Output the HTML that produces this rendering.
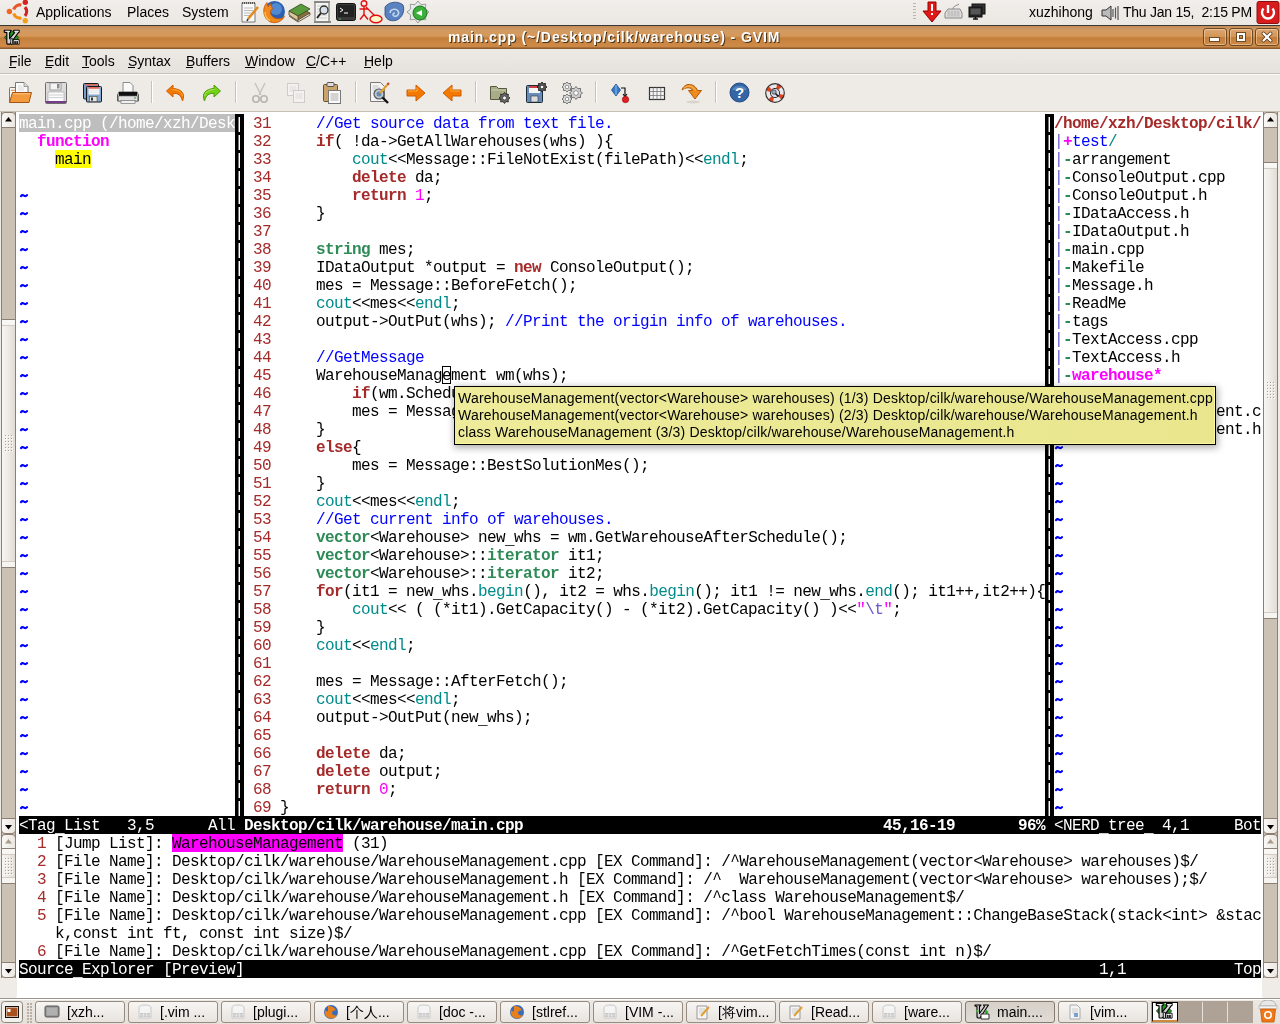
<!DOCTYPE html>
<html><head><meta charset="utf-8">
<style>
*{margin:0;padding:0;box-sizing:border-box}
html,body{width:1280px;height:1024px;overflow:hidden;-webkit-font-smoothing:antialiased;background:#efebe7;font-family:"Liberation Sans",sans-serif;position:relative}
.abs{position:absolute}
#panel{position:absolute;will-change:transform;left:0;top:0;width:1280px;height:26px;background:linear-gradient(#f1eeeb,#ebe7e2);border-bottom:1px solid #3c3833}
.pt{position:absolute;top:4px;font-size:14px;color:#000;white-space:pre;line-height:16px}
#title{position:absolute;left:0;top:26px;width:1280px;height:23px;background:linear-gradient(#c48c58 0px,#d29a62 4px,#d6985a 10px,#cf8c4a 11px,#c37e3a 12px,#c7823f 14px,#cf8a48 20px,#c88444 21px,#8e5c2a 22px,#8e5c2a 23px)}
#ttext{position:absolute;will-change:transform;left:448px;top:3px;width:332px;color:#fff;font-weight:bold;font-size:14px;letter-spacing:0.9px;white-space:pre;text-shadow:1px 1px 0 #4a3418}
.wb{position:absolute;top:2px;width:24px;height:18px;border:1px solid #6e4a22;border-radius:3px;background:linear-gradient(#dea674,#d29555 48%,#c47e3c 52%,#cd8a48);box-shadow:inset 0 0 0 1px rgba(255,230,200,0.45)}
.wb i{position:absolute;background:#fff;box-shadow:0 0 0 1px #6e4a22}
#menubar{position:absolute;will-change:transform;left:0;top:49px;width:1280px;height:25px;background:linear-gradient(#edeae6,#e5e1dc);border-bottom:1px solid #c9c1b8}
.mi{position:absolute;top:4px;font-size:14px;color:#000;white-space:pre;line-height:16px}
.ul{position:absolute;height:1px;background:#000}
#toolbar{position:absolute;left:0;top:74px;width:1280px;height:38px;background:#eeebe7;border-bottom:1px solid #c8bfb4;box-shadow:inset 0 1px 0 #fbfaf8}
.tsep{position:absolute;top:7px;width:2px;height:22px;border-left:1px solid #c9c1b8;border-right:1px solid #fff}
#text{position:absolute;left:16px;top:112px;width:1247px;height:886px;background:#fff}
.r{position:absolute;will-change:transform;font-family:"Liberation Mono",monospace;font-size:16px;letter-spacing:-0.6px;line-height:20px;height:18px;white-space:pre;color:#000}
.r span{display:inline-block;height:18px;vertical-align:top}
.r span.us{display:inline;height:auto;position:relative;top:2px;vertical-align:baseline}
.vs{position:absolute;width:9px;background:#000}
.vs::after{content:"";position:absolute;left:4px;top:0;width:1px;height:100%;background:repeating-linear-gradient(to bottom,#000 0,#000 3px,#fff 3px,#fff 18px)}
.vs::before{content:"";position:absolute;left:3px;top:0;width:1px;height:100%;background:repeating-linear-gradient(to bottom,#000 0,#000 3px,#777 3px,#777 18px)}
.sl{position:absolute;height:18px;background:#000}
.st{color:#fff}
.b{font-weight:bold}
.sb{position:absolute;width:15px;background:#cbc1b5;border-left:1px solid #8a7f72;border-right:1px solid #8a7f72}
.sbtn{position:absolute;width:15px;height:16px;background:linear-gradient(90deg,#faf8f6,#ebe6e0);border:1px solid #8a7f72}
.thumb{position:absolute;width:15px;border:1px solid #8a7f72;background:linear-gradient(to bottom,#faf9f7 0,#f7f5f2 5px,#d3ccc4 5px,#d3ccc4 6px,transparent 6px,transparent calc(100% - 6px),#d3ccc4 calc(100% - 6px),#d3ccc4 calc(100% - 5px),#f7f5f2 calc(100% - 5px)),linear-gradient(90deg,#f8f6f3,#e2dcd5)}
#tip{position:absolute;will-change:transform;left:454px;top:386px;width:762px;height:59px;background:linear-gradient(90deg,#eeeb9a,#e9e68e);border:1px solid #000;font-size:14px;line-height:17px;padding:3px 0 0 3px;white-space:pre;color:#000;letter-spacing:0.2px;box-shadow:inset -1px -1px 0 #fbf99c,1px 2px 7px 1px rgba(0,0,0,0.32)}
#taskbar{position:absolute;will-change:transform;left:0;top:998px;width:1280px;height:26px;background:linear-gradient(#ebe7e2,#e6e1db);border-top:1px solid #9c948a;box-shadow:inset 0 1px 0 #fff}
.tb{position:absolute;top:2px;width:90px;height:22px;border:1px solid #958b80;border-radius:3px;background:linear-gradient(#f7f5f3,#e8e3de);font-size:14px;line-height:19px;white-space:pre;color:#000}
.tb span{position:absolute;left:31px;top:1px}
.tb.act{background:linear-gradient(#d6d0c9,#e0dbd5);border-color:#857b70}
</style></head><body>
<div id="panel"><svg class="abs" style="left:0px;top:0px" width="32" height="25" viewBox="0 0 32 25"><path d="M13.72 9.46A6.6 6.6 0 0 1 21.37 5.04" fill="none" stroke="#e8562a" stroke-width="3.2"/><path d="M24.90 7.08A6.6 6.6 0 0 1 24.90 15.92" fill="none" stroke="#d42020" stroke-width="3.2"/><path d="M21.37 17.96A6.6 6.6 0 0 1 13.72 13.54" fill="none" stroke="#f39010" stroke-width="3.2"/><circle cx="9.40" cy="11.50" r="2.7" fill="#f26522"/><circle cx="25.30" cy="2.32" r="2.7" fill="#d8201c"/><circle cx="25.30" cy="20.68" r="2.7" fill="#f5a01a"/></svg><svg class="abs" style="left:239px;top:1px" width="22" height="22" viewBox="0 0 22 22"><path d="M3 2h13v19H3z" fill="#fafafa" stroke="#777"/><path d="M3 2h13" stroke="#555" stroke-dasharray="1 1" stroke-width="2"/><path d="M5 7h9M5 9.5h9M5 12h7M5 14.5h6" stroke="#aaa" stroke-width="0.8"/><path d="M9 18L19 6" stroke="#e08a20" stroke-width="2.6"/><path d="M9 18l-1 2" stroke="#333" stroke-width="1.5"/></svg><svg class="abs" style="left:262px;top:0px" width="24" height="24" viewBox="0 0 24 24"><circle cx="12.5" cy="11.5" r="10.5" fill="#2d5fae"/><circle cx="14" cy="9" r="6" fill="#5f9ae0" opacity="0.7"/><path d="M5 2.5C0.5 7 0.5 16 6 20.5 11 24.5 19 23 22.5 16.5 19.5 19.5 13.5 19.5 10.5 16.5 7.5 13.5 8 9.5 11 8.5 9.5 7.5 8.5 6 9 3.5 7.5 4.5 6.5 5.5 6.3 6.8 5.5 5.5 5.2 4 5 2.5z" fill="#f08a1c" stroke="#c0500a" stroke-width="0.8"/><path d="M3 12c0 4 2 7 5 8.5" stroke="#fbc04a" stroke-width="1.5" fill="none"/></svg><svg class="abs" style="left:287px;top:1px" width="24" height="22" viewBox="0 0 24 22"><path d="M2 13l12-6 9 5-12 7z" fill="#8a7040" stroke="#4a3a20" stroke-width="0.8"/><path d="M2 10l12-7 9 5-12 7z" fill="#5a9a3a" stroke="#2a4a1a" stroke-width="0.8"/><path d="M2 10v4l9 6v-5z" fill="#d8c8a0" stroke="#4a3a20" stroke-width="0.8"/><path d="M2 15l9 6 12-7v-2" fill="none" stroke="#4a3a20" stroke-width="0.8"/></svg><svg class="abs" style="left:312px;top:1px" width="22" height="22" viewBox="0 0 22 22"><path d="M3 1h14v20H3z" fill="#f4f4f0" stroke="#666"/><path d="M2 1h16M2 21h17" stroke="#888" stroke-width="2"/><path d="M5 5h10M5 8h10M5 11h10M5 14h10M5 17h10" stroke="#bbb" stroke-width="0.7"/><circle cx="12" cy="9" r="4" fill="#d8e0e8" stroke="#333" stroke-width="1.3"/><path d="M9 12l-4 5" stroke="#222" stroke-width="2"/></svg><svg class="abs" style="left:335px;top:2px" width="22" height="20" viewBox="0 0 22 20"><rect x="1.5" y="1.5" width="19" height="17" rx="2" fill="#3a3a3a" stroke="#111"/><rect x="3" y="3" width="16" height="12" fill="#222"/><path d="M5 6l3 2-3 2M9 11h4" stroke="#fff" stroke-width="1" fill="none"/><circle cx="5" cy="17" r="0.8" fill="#4c4"/></svg><svg class="abs" style="left:357px;top:0px" width="26" height="24" viewBox="0 0 26 24"><circle cx="7" cy="3.5" r="2.8" fill="none" stroke="#e01010" stroke-width="1.4"/><path d="M7 6.5v8M2.5 9h9M7 14.5l-4 5M7 14.5l4 5M9 7l9 9" stroke="#e01010" stroke-width="1.4" fill="none"/><ellipse cx="19" cy="19" rx="6" ry="3.8" fill="#faf8c8" stroke="#e01010" stroke-width="1.4"/></svg><svg class="abs" style="left:383px;top:1px" width="22" height="22" viewBox="0 0 22 22"><path d="M2 6c4-6 14-6 18-2 2 5 0 12-6 15-5 2-11 0-12-5z" fill="#5a82c0" stroke="#2a4a80" stroke-width="0.8"/><path d="M7 12c0-4 6-5 8-2s-1 6-4 5c-2-1-1-3 1-3" fill="none" stroke="#c0d8f0" stroke-width="1.5"/></svg><svg class="abs" style="left:405px;top:0px" width="26" height="24" viewBox="0 0 26 24"><polygon points="24.00,12.00 20.32,15.03 20.78,19.78 16.03,19.32 13.00,23.00 9.97,19.32 5.22,19.78 5.68,15.03 2.00,12.00 5.68,8.97 5.22,4.22 9.97,4.68 13.00,1.00 16.03,4.68 20.78,4.22 20.32,8.97" fill="#e8ece8" stroke="#888" stroke-width="0.8" stroke-linejoin="round"/><circle cx="13" cy="12" r="3.8" fill="#fff" stroke="#888" stroke-width="0.6"/><circle cx="15" cy="13" r="7" fill="#3ab03a" stroke="#1a701a" stroke-width="1"/><path d="M11 13l6-3v6z" fill="#fff"/></svg><div class="abs" style="left:913px;top:3px;width:3px;height:18px;background:repeating-linear-gradient(#bdb6ae 0 1px,transparent 1px 3px)"></div><svg class="abs" style="left:921px;top:1px" width="22" height="22" viewBox="0 0 22 22"><path d="M7 1h8v9h5l-9 11-9-11h5z" fill="#e01818" stroke="#900" stroke-width="1"/><path d="M10 3h2v7h-2zM10 12h2v2h-2z" fill="#fff"/></svg><svg class="abs" style="left:943px;top:3px" width="20" height="18" viewBox="0 0 20 18"><path d="M2 10l3-4h12l2 4v5H2z" fill="#e0e0e0" stroke="#888"/><path d="M4 9h13M4 11h13M4 13h13M6 7v6M9 7v6M12 7v6M15 7v6" stroke="#aaa" stroke-width="0.6"/><path d="M10 6c0-3 3-3 6-5" stroke="#888" fill="none"/></svg><svg class="abs" style="left:967px;top:3px" width="20" height="18" viewBox="0 0 20 18"><rect x="5" y="1" width="13" height="10" fill="#333" stroke="#111"/><rect x="2" y="4" width="13" height="10" fill="#222" stroke="#111"/><rect x="3.5" y="5.5" width="10" height="6" fill="#555"/><path d="M6 16h5M8.5 14v2" stroke="#111" stroke-width="1.6"/></svg><svg class="abs" style="left:1100px;top:4px" width="20" height="18" viewBox="0 0 20 18"><path d="M2 6h4l5-4v14l-5-4H2z" fill="#bbb" stroke="#333"/><path d="M13 5v8M15.5 3.5v11M18 2v14" stroke="#555" stroke-width="1.2"/></svg><svg class="abs" style="left:1256px;top:1px" width="24" height="23" viewBox="0 0 24 23"><rect x="1" y="0.5" width="22" height="22" rx="2" fill="#d81c1c" stroke="#8a1010"/><path d="M7.5 7.5a6 6 0 1 0 9 0" stroke="#fff" stroke-width="2.4" fill="none"/><path d="M12 4v8" stroke="#fff" stroke-width="2.4"/></svg>
<div class="pt" style="left:36px;width:77px">Applications</div>
<div class="pt" style="left:127px;width:41px">Places</div>
<div class="pt" style="left:182px;width:48px">System</div>
<div class="pt" style="left:1029px;width:64px">xuzhihong</div>
<div class="pt" style="left:1123px;letter-spacing:-0.25px">Thu Jan 15,  2:15 PM</div>
</div>
<div id="title"><svg class="abs" style="left:3px;top:3px" width="17" height="17" viewBox="0 0 20 20"><path d="M10 1.5L18.5 10 10 18.5 1.5 10z" fill="#1e9a1e" stroke="#063806" stroke-width="0.9"/><path d="M1.5 1.5h7.5v2.2l-1.2.6v7.2l5.8-7.2-1-.6V1.5h6.4v2.2l-.8.4L8.2 17.8H5.2l-.7-.8V4.3l-3-.6z" fill="#d2d2d2" stroke="#000" stroke-width="1.3" stroke-linejoin="round"/><path d="M3 2.7h5M14 2.7h4.5" stroke="#fff" stroke-width="0.8"/><path d="M9.2 11.5h2.3v6.5H9.2zM12 12.5h7v5.5h-2v-3.5h-.8v3.5h-1.6v-3.5h-.8v3.5H12z" fill="#fff" stroke="#000" stroke-width="1"/></svg><div id="ttext">main.cpp (~/Desktop/cilk/warehouse) - GVIM</div>
<div class="wb" style="left:1203px"><i style="left:6px;top:9px;width:9px;height:3px"></i></div>
<div class="wb" style="left:1229px"><i style="left:7px;top:4px;width:8px;height:8px;background:transparent;border:2px solid #fff;box-shadow:0 0 0 1px #6e4a22,inset 0 0 0 1px #6e4a22"></i></div>
<div class="wb" style="left:1255px"><svg class="abs" style="left:5px;top:2px" width="12" height="12" viewBox="0 0 12 12"><path d="M2.5 2.5l7 7M9.5 2.5l-7 7" stroke="#5a3a18" stroke-width="3.8" stroke-linecap="round"/><path d="M2.5 2.5l7 7M9.5 2.5l-7 7" stroke="#fff" stroke-width="2.2" stroke-linecap="round"/></svg></div></div>
<div id="menubar"><div class="mi" style="left:9px;width:20px">File</div><div class="ul" style="left:9px;top:18px;width:7px"></div><div class="mi" style="left:45px;width:23px">Edit</div><div class="ul" style="left:45px;top:18px;width:7px"></div><div class="mi" style="left:82px;width:31px">Tools</div><div class="ul" style="left:82px;top:18px;width:7px"></div><div class="mi" style="left:128px;width:44px">Syntax</div><div class="ul" style="left:128px;top:18px;width:7px"></div><div class="mi" style="left:186px;width:45px">Buffers</div><div class="ul" style="left:186px;top:18px;width:7px"></div><div class="mi" style="left:245px;width:47px">Window</div><div class="ul" style="left:245px;top:18px;width:10px"></div><div class="mi" style="left:306px;width:43px">C/C++</div><div class="ul" style="left:306px;top:18px;width:10px"></div><div class="mi" style="left:364px;width:28px">Help</div><div class="ul" style="left:364px;top:18px;width:7px"></div></div>
<div id="toolbar"><div class="tsep" style="left:151px"></div><div class="tsep" style="left:235px"></div><div class="tsep" style="left:355px"></div><div class="tsep" style="left:475px"></div><div class="tsep" style="left:595px"></div><div class="tsep" style="left:715px"></div></div><svg class="abs" style="left:8px;top:81px" width="24" height="24" viewBox="0 0 24 24">
<rect x="1.5" y="6.5" width="8" height="15" rx="0.8" fill="#f6f6f4" stroke="#777" stroke-width="1"/>
<path d="M3 9.3h4" stroke="#f08a3a" stroke-width="1"/>
<path d="M7.5 1.5h8.5l4 4v12h-12.5z" fill="#fbfbfb" stroke="#777" stroke-width="1"/>
<path d="M16 1.5v4h4" fill="#ddd" stroke="#888" stroke-width="0.8"/>
<path d="M10 5h4M10 7h6M10 9h6" stroke="#ccc" stroke-width="0.7"/>
<path d="M4.5 11.5h19l-2.5 10h-19.5z" fill="#f39a3c" stroke="#a65414" stroke-width="1" stroke-linejoin="round"/>
<path d="M5.2 12.8h17" stroke="#fcc88c" stroke-width="1"/>
</svg>
<svg class="abs" style="left:44px;top:81px" width="24" height="24" viewBox="0 0 24 24">
<rect x="1.5" y="1.5" width="21" height="21" rx="1" fill="#dcdcdc" stroke="#6e6e6e"/>
<rect x="6" y="2" width="11" height="7" fill="#f4f4f4" stroke="#8a8a8a" stroke-width="0.8"/>
<rect x="13" y="3" width="2.5" height="4.5" fill="#8a8a8a"/>
<rect x="4" y="11" width="16" height="10" fill="#fbfbfb" stroke="#9a9a9a" stroke-width="0.6"/>
<path d="M5 14h14M5 16.5h14" stroke="#c0c0c0" stroke-width="0.7"/>
<rect x="2" y="20" width="20" height="2" fill="#7a3a8a"/>
</svg>
<svg class="abs" style="left:80px;top:81px" width="24" height="24" viewBox="0 0 24 24">
<rect x="3.5" y="2.5" width="15" height="15.5" rx="1" fill="#7a9cc4" stroke="#111a24"/>
<rect x="5" y="3" width="12" height="1.6" fill="#e06a5a"/>
<rect x="6.5" y="5.5" width="15" height="15.5" rx="1" fill="#86a8d0" stroke="#111a24"/>
<rect x="8.5" y="6" width="11" height="7.5" fill="#f6f6f6"/>
<rect x="8.5" y="6" width="11" height="1.8" fill="#e06a5a"/>
<path d="M9 9.5h10M9 11.5h10" stroke="#ddd" stroke-width="0.6"/>
<rect x="9.5" y="15.5" width="7.5" height="5" fill="#e8e8e0" stroke="#333" stroke-width="0.5"/>
<rect x="11" y="16.5" width="2" height="3" fill="#333"/>
</svg>
<svg class="abs" style="left:116px;top:81px" width="24" height="24" viewBox="0 0 24 24">
<path d="M7 1.5h7l3 3v7H7z" fill="#fafafa" stroke="#8a8a8a"/>
<path d="M3 11h18l1.5 3v6h-21v-6z" fill="#c8c8c8" stroke="#5a5a5a"/>
<rect x="3" y="11" width="18" height="4" fill="#111"/>
<rect x="2.5" y="15" width="19" height="5" fill="#e0e0e0" stroke="#6a6a6a" stroke-width="0.6"/>
<rect x="5" y="19.5" width="14" height="3" fill="#f0f0f0" stroke="#777" stroke-width="0.7"/>
<circle cx="19" cy="17" r="0.9" fill="#4caf50"/>
</svg>
<svg class="abs" style="left:164px;top:81px" width="24" height="24" viewBox="0 0 24 24">
<path d="M9 4L2.5 10L9 16V12.5C14 12 17 14 18.5 20C21.5 13 18 8 9 7.5Z" fill="#f57900" stroke="#ce5c00" stroke-width="1" stroke-linejoin="round"/>
<path d="M8.5 8.5C14 8.5 17.5 11 18.5 15" stroke="#fcaf3e" stroke-width="1" fill="none"/>
</svg>
<svg class="abs" style="left:199px;top:81px" width="24" height="24" viewBox="0 0 24 24">
<path d="M15 4L21.5 10L15 16V12.5C10 12 7 14 5.5 20C2.5 13 6 8 15 7.5Z" fill="#73d216" stroke="#4e9a06" stroke-width="1" stroke-linejoin="round"/>
<path d="M15.5 8.5C10 8.5 6.5 11 5.5 15" stroke="#b0e070" stroke-width="1" fill="none"/>
</svg>
<svg class="abs" style="left:248px;top:81px" width="24" height="24" viewBox="0 0 24 24">
<path d="M7 2L13 14M17 2L11 14" stroke="#c8c4c0" stroke-width="1.6" fill="none"/>
<circle cx="8" cy="18" r="3.2" fill="none" stroke="#b8b4b0" stroke-width="1.6"/>
<circle cx="16" cy="18" r="3.2" fill="none" stroke="#b8b4b0" stroke-width="1.6"/>
</svg>
<svg class="abs" style="left:284px;top:81px" width="24" height="24" viewBox="0 0 24 24">
<rect x="3.5" y="2.5" width="11" height="12" fill="#f4f2f0" stroke="#cfcbc7"/>
<path d="M5.5 6h7M5.5 8h7M5.5 10h7" stroke="#d8d4d0" stroke-width="0.8"/>
<rect x="9.5" y="9.5" width="11" height="12" fill="#f4f2f0" stroke="#cfcbc7"/>
<path d="M11.5 13h7M11.5 15h7M11.5 17h7" stroke="#d8d4d0" stroke-width="0.8"/>
</svg>
<svg class="abs" style="left:320px;top:81px" width="24" height="24" viewBox="0 0 24 24">
<rect x="3.5" y="3.5" width="14" height="17" rx="1" fill="#c9a36a" stroke="#6e5020"/>
<rect x="7" y="1.5" width="7" height="4" rx="1" fill="#ddd" stroke="#555"/>
<rect x="8.5" y="9.5" width="12" height="13" fill="#fafafa" stroke="#777"/>
<path d="M10.5 13h8M10.5 15h8M10.5 17h8M10.5 19h8" stroke="#999" stroke-width="0.8"/>
</svg>
<svg class="abs" style="left:368px;top:81px" width="24" height="24" viewBox="0 0 24 24">
<path d="M2.5 1.5h10l4 4v15h-14z" fill="#f4f4f4" stroke="#7a7a7a"/>
<path d="M4.5 5h6M4.5 7h8M4.5 9h4" stroke="#bbb" stroke-width="0.8"/>
<circle cx="11" cy="13" r="5" fill="#b8c8d8" stroke="#555" stroke-width="1.2"/>
<circle cx="11" cy="13" r="2.5" fill="#6a8ab0"/>
<path d="M14.5 16.5L20 22" stroke="#111" stroke-width="2.4"/>
<path d="M12 12L20.5 2.5" stroke="#e0a030" stroke-width="2.2"/>
<path d="M19.5 3.5L21 2" stroke="#c04040" stroke-width="2.2"/>
</svg>
<svg class="abs" style="left:404px;top:81px" width="24" height="24" viewBox="0 0 24 24">
<path d="M3 9h9V4l9 8-9 8v-5H3z" fill="#f57900" stroke="#ce5c00" stroke-width="1" stroke-linejoin="round"/>
<path d="M4 10h9V6.5" stroke="#fcaf3e" stroke-width="1" fill="none"/>
</svg>
<svg class="abs" style="left:440px;top:81px" width="24" height="24" viewBox="0 0 24 24">
<path d="M21 9h-9V4l-9 8 9 8v-5h9z" fill="#f57900" stroke="#ce5c00" stroke-width="1" stroke-linejoin="round"/>
<path d="M20 10h-9V6.5" stroke="#fcaf3e" stroke-width="1" fill="none"/>
</svg>
<svg class="abs" style="left:488px;top:81px" width="24" height="24" viewBox="0 0 24 24">
<path d="M2.5 5.5h6l2 2h8v11h-16z" fill="#a8ad88" stroke="#555a40"/>
<path d="M3 9h15" stroke="#c8ccb0"/>
<polygon points="22.00,17.00 20.16,18.52 20.39,20.89 18.02,20.66 16.50,22.50 14.98,20.66 12.61,20.89 12.84,18.52 11.00,17.00 12.84,15.48 12.61,13.11 14.98,13.34 16.50,11.50 18.02,13.34 20.39,13.11 20.16,15.48" fill="#666" stroke="#222" stroke-width="0.8" stroke-linejoin="round"/><circle cx="16.5" cy="17" r="1.9" fill="#fff" stroke="#222" stroke-width="0.6"/></svg>
<svg class="abs" style="left:524px;top:81px" width="24" height="24" viewBox="0 0 24 24">
<rect x="2.5" y="4.5" width="16" height="17" rx="1" fill="#6a8cb8" stroke="#1a2a3a"/>
<rect x="5" y="5" width="11" height="7" fill="#f4f4f4"/>
<rect x="5" y="5" width="11" height="2" fill="#d04040"/>
<rect x="7" y="15" width="7" height="6" fill="#ddd" stroke="#333" stroke-width="0.6"/>
<polygon points="23.00,6.00 21.33,7.38 21.54,9.54 19.38,9.33 18.00,11.00 16.62,9.33 14.46,9.54 14.67,7.38 13.00,6.00 14.67,4.62 14.46,2.46 16.62,2.67 18.00,1.00 19.38,2.67 21.54,2.46 21.33,4.62" fill="#555" stroke="#111" stroke-width="0.8" stroke-linejoin="round"/><circle cx="18" cy="6" r="1.8" fill="#fff" stroke="#111" stroke-width="0.6"/></svg>
<svg class="abs" style="left:560px;top:81px" width="24" height="24" viewBox="0 0 24 24"><polygon points="12.00,6.00 10.33,7.38 10.54,9.54 8.38,9.33 7.00,11.00 5.62,9.33 3.46,9.54 3.67,7.38 2.00,6.00 3.67,4.62 3.46,2.46 5.62,2.67 7.00,1.00 8.38,2.67 10.54,2.46 10.33,4.62" fill="#e0e0e0" stroke="#555" stroke-width="0.8" stroke-linejoin="round"/><circle cx="7" cy="6" r="1.8" fill="#fff" stroke="#555" stroke-width="0.6"/><polygon points="22.50,12.00 20.32,13.79 20.60,16.60 17.79,16.32 16.00,18.50 14.21,16.32 11.40,16.60 11.68,13.79 9.50,12.00 11.68,10.21 11.40,7.40 14.21,7.68 16.00,5.50 17.79,7.68 20.60,7.40 20.32,10.21" fill="#d0d0d0" stroke="#555" stroke-width="0.8" stroke-linejoin="round"/><circle cx="16" cy="12" r="2.3" fill="#fff" stroke="#555" stroke-width="0.6"/><polygon points="12.00,18.00 10.33,19.38 10.54,21.54 8.38,21.33 7.00,23.00 5.62,21.33 3.46,21.54 3.67,19.38 2.00,18.00 3.67,16.62 3.46,14.46 5.62,14.67 7.00,13.00 8.38,14.67 10.54,14.46 10.33,16.62" fill="#e0e0e0" stroke="#555" stroke-width="0.8" stroke-linejoin="round"/><circle cx="7" cy="18" r="1.8" fill="#fff" stroke="#555" stroke-width="0.6"/></svg>
<svg class="abs" style="left:608px;top:81px" width="24" height="24" viewBox="0 0 24 24">
<path d="M8 3l-4.5 6 4.5 6 4.5-6z" fill="#3a78c8" stroke="#1a4a8a" stroke-width="0.8"/>
<path d="M8 4v10" stroke="#90c0f0" stroke-width="1"/>
<path d="M13 7h4v8" stroke="#111" stroke-width="1.2" fill="none"/>
<path d="M15 13l2 2.5 2-2.5" stroke="#111" stroke-width="1.2" fill="none"/>
<circle cx="17.5" cy="18.5" r="3.2" fill="#e02020" stroke="#900" stroke-width="0.6"/>
</svg>
<svg class="abs" style="left:644px;top:81px" width="24" height="24" viewBox="0 0 24 24">
<rect x="5.5" y="6.5" width="15" height="12" fill="#f4f4f4" stroke="#333" stroke-width="1.2"/>
<path d="M5.5 10.5h15M5.5 14.5h15M9.25 6.5v12M13 6.5v12M16.75 6.5v12" stroke="#777" stroke-width="0.8"/>
</svg>
<svg class="abs" style="left:680px;top:81px" width="24" height="24" viewBox="0 0 24 24">
<ellipse cx="13" cy="21" rx="7" ry="1.5" fill="#d8d4cc"/>
<path d="M2 9C4 2 14 1 17.5 9.5H21.5L15 18 8.5 9.5H12.5C11 6 6 6 2 9z" fill="#f08a1c" stroke="#b05a08" stroke-width="1" stroke-linejoin="round"/>
<path d="M4 7.5C7 4 13 4 15.5 10" stroke="#fcc070" stroke-width="1" fill="none"/>
</svg>
<svg class="abs" style="left:728px;top:81px" width="24" height="24" viewBox="0 0 24 24">
<circle cx="11.5" cy="11.5" r="9.5" fill="#3465a4" stroke="#204a87" stroke-width="1"/>
<path d="M4 9A8 6 0 0 1 19 9" fill="#729fcf" opacity="0.6"/>
<text x="11.5" y="17" text-anchor="middle" font-family="Liberation Sans" font-weight="bold" font-size="15" fill="#fff">?</text>
</svg>
<svg class="abs" style="left:765px;top:83px" width="20" height="20" viewBox="0 0 20 20">
<circle cx="10" cy="10" r="7" fill="none" stroke="#e8e8e8" stroke-width="4.5"/>
<circle cx="10" cy="10" r="7" fill="none" stroke="#e04020" stroke-width="4.5" stroke-dasharray="4 7" stroke-dashoffset="-1.5"/>
<circle cx="10" cy="10" r="9.3" fill="none" stroke="#333" stroke-width="1.2"/>
<circle cx="10" cy="10" r="4.6" fill="#dde" stroke="#333" stroke-width="1"/>
<circle cx="9" cy="9" r="2.2" fill="#9ab" stroke="#444" stroke-width="0.8"/>
<path d="M10.5 10.5l3 3" stroke="#111" stroke-width="1.5"/>
</svg>
<div id="text"></div>
<div class="sb" style="left:1px;top:112px;height:722px"></div><div class="sbtn" style="left:1px;top:112px;border-radius:4px 4px 0 0"><svg class="abs" style="left:0;top:0" width="15" height="15" viewBox="0 0 15 15"><path d="M3 8.5h7L6.5 4z" fill="#000"/></svg></div><div class="thumb" style="left:1px;top:319px;height:249px"></div><div class="abs" style="left:4px;top:434px;width:9px;height:18px;background-image:radial-gradient(circle at 1.5px 1.5px,#a8a098 0.7px,transparent 0.9px),radial-gradient(circle at 2.5px 2.5px,#fff 0.8px,transparent 1.1px);background-size:3px 3px"></div><div class="sbtn" style="left:1px;top:818px;border-radius:0 0 4px 4px"><svg class="abs" style="left:0;top:0" width="15" height="15" viewBox="0 0 15 15"><path d="M3 6h7L6.5 10.5z" fill="#000"/></svg></div><div class="sb" style="left:1263px;top:112px;height:722px"></div><div class="sbtn" style="left:1263px;top:112px;border-radius:4px 4px 0 0"><svg class="abs" style="left:0;top:0" width="15" height="15" viewBox="0 0 15 15"><path d="M3 8.5h7L6.5 4z" fill="#000"/></svg></div><div class="thumb" style="left:1263px;top:162px;height:457px"></div><div class="abs" style="left:1266px;top:381px;width:9px;height:18px;background-image:radial-gradient(circle at 1.5px 1.5px,#a8a098 0.7px,transparent 0.9px),radial-gradient(circle at 2.5px 2.5px,#fff 0.8px,transparent 1.1px);background-size:3px 3px"></div><div class="sbtn" style="left:1263px;top:818px;border-radius:0 0 4px 4px"><svg class="abs" style="left:0;top:0" width="15" height="15" viewBox="0 0 15 15"><path d="M3 6h7L6.5 10.5z" fill="#000"/></svg></div><div class="sb" style="left:1px;top:834px;height:144px"></div><div class="sbtn" style="left:1px;top:834px;border-radius:4px 4px 0 0"><svg class="abs" style="left:0;top:0" width="15" height="15" viewBox="0 0 15 15"><path d="M3 8.5h7L6.5 4z" fill="#a89c8e"/></svg></div><div class="thumb" style="left:1px;top:848px;height:36px"></div><div class="abs" style="left:4px;top:857px;width:9px;height:18px;background-image:radial-gradient(circle at 1.5px 1.5px,#a8a098 0.7px,transparent 0.9px),radial-gradient(circle at 2.5px 2.5px,#fff 0.8px,transparent 1.1px);background-size:3px 3px"></div><div class="sbtn" style="left:1px;top:962px;border-radius:0 0 4px 4px"><svg class="abs" style="left:0;top:0" width="15" height="15" viewBox="0 0 15 15"><path d="M3 6h7L6.5 10.5z" fill="#000"/></svg></div><div class="sb" style="left:1263px;top:834px;height:144px"></div><div class="sbtn" style="left:1263px;top:834px;border-radius:4px 4px 0 0"><svg class="abs" style="left:0;top:0" width="15" height="15" viewBox="0 0 15 15"><path d="M3 8.5h7L6.5 4z" fill="#a89c8e"/></svg></div><div class="thumb" style="left:1263px;top:848px;height:36px"></div><div class="abs" style="left:1266px;top:857px;width:9px;height:18px;background-image:radial-gradient(circle at 1.5px 1.5px,#a8a098 0.7px,transparent 0.9px),radial-gradient(circle at 2.5px 2.5px,#fff 0.8px,transparent 1.1px);background-size:3px 3px"></div><div class="sbtn" style="left:1263px;top:962px;border-radius:0 0 4px 4px"><svg class="abs" style="left:0;top:0" width="15" height="15" viewBox="0 0 15 15"><path d="M3 6h7L6.5 10.5z" fill="#000"/></svg></div><div class="abs" style="left:0;top:978px;width:17px;height:19px;background:#efebe7"></div><div class="abs" style="left:1262px;top:978px;width:18px;height:19px;background:#efebe7"></div>
<div class="vs" style="left:235px;top:114px;height:702px"></div><div class="vs" style="left:1045px;top:114px;height:702px"></div><svg class="abs" style="left:0;top:0" width="1280" height="1024"><defs><path id="tl" d="M2 10.1C2.9 8.9 4 8.9 5 9.6S7.1 10.3 8 9.1" fill="none" stroke="#00f" stroke-width="2.2" stroke-linecap="round"/></defs><use href="#tl" x="19" y="186"/><use href="#tl" x="19" y="204"/><use href="#tl" x="19" y="222"/><use href="#tl" x="19" y="240"/><use href="#tl" x="19" y="258"/><use href="#tl" x="19" y="276"/><use href="#tl" x="19" y="294"/><use href="#tl" x="19" y="312"/><use href="#tl" x="19" y="330"/><use href="#tl" x="19" y="348"/><use href="#tl" x="19" y="366"/><use href="#tl" x="19" y="384"/><use href="#tl" x="19" y="402"/><use href="#tl" x="19" y="420"/><use href="#tl" x="19" y="438"/><use href="#tl" x="19" y="456"/><use href="#tl" x="19" y="474"/><use href="#tl" x="19" y="492"/><use href="#tl" x="19" y="510"/><use href="#tl" x="19" y="528"/><use href="#tl" x="19" y="546"/><use href="#tl" x="19" y="564"/><use href="#tl" x="19" y="582"/><use href="#tl" x="19" y="600"/><use href="#tl" x="19" y="618"/><use href="#tl" x="19" y="636"/><use href="#tl" x="19" y="654"/><use href="#tl" x="19" y="672"/><use href="#tl" x="19" y="690"/><use href="#tl" x="19" y="708"/><use href="#tl" x="19" y="726"/><use href="#tl" x="19" y="744"/><use href="#tl" x="19" y="762"/><use href="#tl" x="19" y="780"/><use href="#tl" x="19" y="798"/><use href="#tl" x="1054" y="438"/><use href="#tl" x="1054" y="456"/><use href="#tl" x="1054" y="474"/><use href="#tl" x="1054" y="492"/><use href="#tl" x="1054" y="510"/><use href="#tl" x="1054" y="528"/><use href="#tl" x="1054" y="546"/><use href="#tl" x="1054" y="564"/><use href="#tl" x="1054" y="582"/><use href="#tl" x="1054" y="600"/><use href="#tl" x="1054" y="618"/><use href="#tl" x="1054" y="636"/><use href="#tl" x="1054" y="654"/><use href="#tl" x="1054" y="672"/><use href="#tl" x="1054" y="690"/><use href="#tl" x="1054" y="708"/><use href="#tl" x="1054" y="726"/><use href="#tl" x="1054" y="744"/><use href="#tl" x="1054" y="762"/><use href="#tl" x="1054" y="780"/><use href="#tl" x="1054" y="798"/></svg><div class="r" style="left:19px;top:114px"><span style="color:#fff;background:#bebebe">main.cpp (/home/xzh/Desk</span></div>
<div class="r" style="left:19px;top:132px">  <span style="color:#ff00ff;font-weight:bold">function</span></div>
<div class="r" style="left:19px;top:150px">    <span style="color:#000;background:#ffff00">main</span></div>
<div class="r" style="left:244px;top:114px"><span style="color:#a52a2a"> 31 </span>    <span style="color:#0000ff">//Get source data from text file.</span></div>
<div class="r" style="left:244px;top:132px"><span style="color:#a52a2a"> 32 </span>    <span style="color:#a52a2a;font-weight:bold">if</span>( !da-&gt;GetAllWarehouses(whs) ){</div>
<div class="r" style="left:244px;top:150px"><span style="color:#a52a2a"> 33 </span>        <span style="color:#008b8b">cout</span>&lt;&lt;Message::FileNotExist(filePath)&lt;&lt;<span style="color:#008b8b">endl</span>;</div>
<div class="r" style="left:244px;top:168px"><span style="color:#a52a2a"> 34 </span>        <span style="color:#a52a2a;font-weight:bold">delete</span> da;</div>
<div class="r" style="left:244px;top:186px"><span style="color:#a52a2a"> 35 </span>        <span style="color:#a52a2a;font-weight:bold">return</span> <span style="color:#ff00ff">1</span>;</div>
<div class="r" style="left:244px;top:204px"><span style="color:#a52a2a"> 36 </span>    }</div>
<div class="r" style="left:244px;top:222px"><span style="color:#a52a2a"> 37 </span></div>
<div class="r" style="left:244px;top:240px"><span style="color:#a52a2a"> 38 </span>    <span style="color:#2e8b57;font-weight:bold">string</span> mes;</div>
<div class="r" style="left:244px;top:258px"><span style="color:#a52a2a"> 39 </span>    IDataOutput *output = <span style="color:#a52a2a;font-weight:bold">new</span> ConsoleOutput();</div>
<div class="r" style="left:244px;top:276px"><span style="color:#a52a2a"> 40 </span>    mes = Message::BeforeFetch();</div>
<div class="r" style="left:244px;top:294px"><span style="color:#a52a2a"> 41 </span>    <span style="color:#008b8b">cout</span>&lt;&lt;mes&lt;&lt;<span style="color:#008b8b">endl</span>;</div>
<div class="r" style="left:244px;top:312px"><span style="color:#a52a2a"> 42 </span>    output-&gt;OutPut(whs); <span style="color:#0000ff">//Print the origin info of warehouses.</span></div>
<div class="r" style="left:244px;top:330px"><span style="color:#a52a2a"> 43 </span></div>
<div class="r" style="left:244px;top:348px"><span style="color:#a52a2a"> 44 </span>    <span style="color:#0000ff">//GetMessage</span></div>
<div class="r" style="left:244px;top:366px"><span style="color:#a52a2a"> 45 </span>    WarehouseManagement wm(whs);</div>
<div class="r" style="left:244px;top:384px"><span style="color:#a52a2a"> 46 </span>        <span style="color:#a52a2a;font-weight:bold">if</span>(wm.ScheduleWarehouses()){</div>
<div class="r" style="left:244px;top:402px"><span style="color:#a52a2a"> 47 </span>        mes = Message::ScheduleMes();</div>
<div class="r" style="left:244px;top:420px"><span style="color:#a52a2a"> 48 </span>    }</div>
<div class="r" style="left:244px;top:438px"><span style="color:#a52a2a"> 49 </span>    <span style="color:#a52a2a;font-weight:bold">else</span>{</div>
<div class="r" style="left:244px;top:456px"><span style="color:#a52a2a"> 50 </span>        mes = Message::BestSolutionMes();</div>
<div class="r" style="left:244px;top:474px"><span style="color:#a52a2a"> 51 </span>    }</div>
<div class="r" style="left:244px;top:492px"><span style="color:#a52a2a"> 52 </span>    <span style="color:#008b8b">cout</span>&lt;&lt;mes&lt;&lt;<span style="color:#008b8b">endl</span>;</div>
<div class="r" style="left:244px;top:510px"><span style="color:#a52a2a"> 53 </span>    <span style="color:#0000ff">//Get current info of warehouses.</span></div>
<div class="r" style="left:244px;top:528px"><span style="color:#a52a2a"> 54 </span>    <span style="color:#2e8b57;font-weight:bold">vector</span>&lt;Warehouse&gt; new<span class="us">_</span>whs = wm.GetWarehouseAfterSchedule();</div>
<div class="r" style="left:244px;top:546px"><span style="color:#a52a2a"> 55 </span>    <span style="color:#2e8b57;font-weight:bold">vector</span>&lt;Warehouse&gt;::<span style="color:#2e8b57;font-weight:bold">iterator</span> it1;</div>
<div class="r" style="left:244px;top:564px"><span style="color:#a52a2a"> 56 </span>    <span style="color:#2e8b57;font-weight:bold">vector</span>&lt;Warehouse&gt;::<span style="color:#2e8b57;font-weight:bold">iterator</span> it2;</div>
<div class="r" style="left:244px;top:582px"><span style="color:#a52a2a"> 57 </span>    <span style="color:#a52a2a;font-weight:bold">for</span>(it1 = new<span class="us">_</span>whs.<span style="color:#008b8b">begin</span>(), it2 = whs.<span style="color:#008b8b">begin</span>(); it1 != new<span class="us">_</span>whs.<span style="color:#008b8b">end</span>(); it1++,it2++){</div>
<div class="r" style="left:244px;top:600px"><span style="color:#a52a2a"> 58 </span>        <span style="color:#008b8b">cout</span>&lt;&lt; ( (*it1).GetCapacity() - (*it2).GetCapacity() )&lt;&lt;<span style="color:#ff00ff">"</span><span style="color:#6a5acd">\t</span><span style="color:#ff00ff">"</span>;</div>
<div class="r" style="left:244px;top:618px"><span style="color:#a52a2a"> 59 </span>    }</div>
<div class="r" style="left:244px;top:636px"><span style="color:#a52a2a"> 60 </span>    <span style="color:#008b8b">cout</span>&lt;&lt;<span style="color:#008b8b">endl</span>;</div>
<div class="r" style="left:244px;top:654px"><span style="color:#a52a2a"> 61 </span></div>
<div class="r" style="left:244px;top:672px"><span style="color:#a52a2a"> 62 </span>    mes = Message::AfterFetch();</div>
<div class="r" style="left:244px;top:690px"><span style="color:#a52a2a"> 63 </span>    <span style="color:#008b8b">cout</span>&lt;&lt;mes&lt;&lt;<span style="color:#008b8b">endl</span>;</div>
<div class="r" style="left:244px;top:708px"><span style="color:#a52a2a"> 64 </span>    output-&gt;OutPut(new<span class="us">_</span>whs);</div>
<div class="r" style="left:244px;top:726px"><span style="color:#a52a2a"> 65 </span></div>
<div class="r" style="left:244px;top:744px"><span style="color:#a52a2a"> 66 </span>    <span style="color:#a52a2a;font-weight:bold">delete</span> da;</div>
<div class="r" style="left:244px;top:762px"><span style="color:#a52a2a"> 67 </span>    <span style="color:#a52a2a;font-weight:bold">delete</span> output;</div>
<div class="r" style="left:244px;top:780px"><span style="color:#a52a2a"> 68 </span>    <span style="color:#a52a2a;font-weight:bold">return</span> <span style="color:#ff00ff">0</span>;</div>
<div class="r" style="left:244px;top:798px"><span style="color:#a52a2a"> 69 </span>}</div>
<div class="r" style="left:1054px;top:114px"><span style="color:#a52a2a;font-weight:bold">/home/xzh/Desktop/cilk/</span></div>
<div class="r" style="left:1054px;top:132px"><span style="color:#6a5acd">|</span><span style="color:#ff00ff;font-weight:bold">+</span><span style="color:#0000ff">test</span><span style="color:#008b8b">/</span></div>
<div class="r" style="left:1054px;top:150px"><span style="color:#6a5acd">|</span><span style="color:#2e8b57;font-weight:bold">-</span>arrangement</div>
<div class="r" style="left:1054px;top:168px"><span style="color:#6a5acd">|</span><span style="color:#2e8b57;font-weight:bold">-</span>ConsoleOutput.cpp</div>
<div class="r" style="left:1054px;top:186px"><span style="color:#6a5acd">|</span><span style="color:#2e8b57;font-weight:bold">-</span>ConsoleOutput.h</div>
<div class="r" style="left:1054px;top:204px"><span style="color:#6a5acd">|</span><span style="color:#2e8b57;font-weight:bold">-</span>IDataAccess.h</div>
<div class="r" style="left:1054px;top:222px"><span style="color:#6a5acd">|</span><span style="color:#2e8b57;font-weight:bold">-</span>IDataOutput.h</div>
<div class="r" style="left:1054px;top:240px"><span style="color:#6a5acd">|</span><span style="color:#2e8b57;font-weight:bold">-</span>main.cpp</div>
<div class="r" style="left:1054px;top:258px"><span style="color:#6a5acd">|</span><span style="color:#2e8b57;font-weight:bold">-</span>Makefile</div>
<div class="r" style="left:1054px;top:276px"><span style="color:#6a5acd">|</span><span style="color:#2e8b57;font-weight:bold">-</span>Message.h</div>
<div class="r" style="left:1054px;top:294px"><span style="color:#6a5acd">|</span><span style="color:#2e8b57;font-weight:bold">-</span>ReadMe</div>
<div class="r" style="left:1054px;top:312px"><span style="color:#6a5acd">|</span><span style="color:#2e8b57;font-weight:bold">-</span>tags</div>
<div class="r" style="left:1054px;top:330px"><span style="color:#6a5acd">|</span><span style="color:#2e8b57;font-weight:bold">-</span>TextAccess.cpp</div>
<div class="r" style="left:1054px;top:348px"><span style="color:#6a5acd">|</span><span style="color:#2e8b57;font-weight:bold">-</span>TextAccess.h</div>
<div class="r" style="left:1054px;top:366px"><span style="color:#6a5acd">|</span><span style="color:#2e8b57;font-weight:bold">-</span><span style="color:#ff00ff;font-weight:bold">warehouse*</span></div>
<div class="r" style="left:1054px;top:384px"><span style="color:#6a5acd">|</span><span style="color:#2e8b57;font-weight:bold">-</span>Warehouse.h</div>
<div class="r" style="left:1054px;top:402px"><span style="color:#6a5acd">|</span><span style="color:#2e8b57;font-weight:bold">-</span>WarehouseManagement.c</div>
<div class="r" style="left:1054px;top:420px"><span style="color:#6a5acd">|</span><span style="color:#2e8b57;font-weight:bold">-</span>WarehouseManagement.h</div>
<div class="r" style="left:19px;top:834px"><span style="color:#a52a2a">  1 </span>[Jump List]: <span style="color:#000;background:#ff00ff">WarehouseManagement</span> (31)</div>
<div class="r" style="left:19px;top:852px"><span style="color:#a52a2a">  2 </span>[File Name]: Desktop/cilk/warehouse/WarehouseManagement.cpp [EX Command]: /^WarehouseManagement(vector&lt;Warehouse&gt; warehouses)$/</div>
<div class="r" style="left:19px;top:870px"><span style="color:#a52a2a">  3 </span>[File Name]: Desktop/cilk/warehouse/WarehouseManagement.h [EX Command]: /^  WarehouseManagement(vector&lt;Warehouse&gt; warehouses);$/</div>
<div class="r" style="left:19px;top:888px"><span style="color:#a52a2a">  4 </span>[File Name]: Desktop/cilk/warehouse/WarehouseManagement.h [EX Command]: /^class WarehouseManagement$/</div>
<div class="r" style="left:19px;top:906px"><span style="color:#a52a2a">  5 </span>[File Name]: Desktop/cilk/warehouse/WarehouseManagement.cpp [EX Command]: /^bool WarehouseManagement::ChangeBaseStack(stack&lt;int&gt; &amp;stac</div>
<div class="r" style="left:19px;top:924px">    k,const int ft, const int size)$/</div>
<div class="r" style="left:19px;top:942px"><span style="color:#a52a2a">  6 </span>[File Name]: Desktop/cilk/warehouse/WarehouseManagement.cpp [EX Command]: /^GetFetchTimes(const int n)$/</div><div class="abs" style="left:442px;top:366px;width:9px;height:18px;border:1px solid #000"></div><div class="sl" style="left:19px;top:816px;width:1242px"></div>
<div class="r st" style="left:19px;top:816px">&lt;Tag<span class="us">_</span>List   3,5      All</div>
<div class="r st b" style="left:244px;top:816px">Desktop/cilk/warehouse/main.cpp</div>
<div class="r st b" style="left:883px;top:816px">45,16-19</div>
<div class="r st b" style="left:1018px;top:816px">96%</div>
<div class="r st" style="left:1054px;top:816px">&lt;NERD<span class="us">_</span>tree<span class="us">_</span> 4,1</div>
<div class="r st" style="left:1234px;top:816px">Bot</div>
<div class="sl" style="left:19px;top:960px;width:1242px"></div>
<div class="r st" style="left:19px;top:960px">Source<span class="us">_</span>Explorer [Preview]</div>
<div class="r st" style="left:1099px;top:960px">1,1</div>
<div class="r st" style="left:1234px;top:960px">Top</div>
<div id="tip">WarehouseManagement(vector&lt;Warehouse&gt; warehouses) (1/3) Desktop/cilk/warehouse/WarehouseManagement.cpp
WarehouseManagement(vector&lt;Warehouse&gt; warehouses) (2/3) Desktop/cilk/warehouse/WarehouseManagement.h
class WarehouseManagement (3/3) Desktop/cilk/warehouse/WarehouseManagement.h</div>
<div id="taskbar"><svg class="abs" style="left:1px;top:2px" width="22" height="22" viewBox="0 0 22 22"><rect x="0.5" y="0.5" width="21" height="21" rx="3" fill="#f2f0ec" stroke="#8d8478"/><rect x="4.5" y="5.5" width="13" height="11" fill="#fff" stroke="#111" stroke-width="1"/><rect x="5.5" y="6.5" width="11" height="9" fill="#a8501e"/><rect x="6.5" y="8" width="3" height="3" fill="#fff"/></svg><div class="abs" style="left:27px;top:4px;width:5px;height:20px;background:radial-gradient(circle at 1px 1px,#b8b0a6 0.9px,transparent 1px);background-size:3px 3px"></div><div class="tb" style="left:35px"><svg class="abs" style="left:8px;top:2px" width="16" height="16" viewBox="0 0 16 16"><rect x="1" y="2" width="14" height="11" rx="1.5" fill="#8a8a8a" stroke="#5a5a5a"/><rect x="2.5" y="3.5" width="11" height="8" fill="#b0b0b0"/></svg><span>[xzh...</span></div><div class="tb" style="left:128px"><svg class="abs" style="left:8px;top:2px" width="16" height="16" viewBox="0 0 16 16"><path d="M2 4c0-2 2-3 6-3s6 1 6 3v10H2z" fill="#f4f4f4" stroke="#c8c8c8"/><rect x="3" y="9" width="10" height="4" fill="#c8c8c8"/><path d="M3 11h10M6.5 9v4M9.5 9v4" stroke="#f0f0f0" stroke-width="0.6"/></svg><span>[.vim ...</span></div><div class="tb" style="left:221px"><svg class="abs" style="left:8px;top:2px" width="16" height="16" viewBox="0 0 16 16"><path d="M2 4c0-2 2-3 6-3s6 1 6 3v10H2z" fill="#f4f4f4" stroke="#c8c8c8"/><rect x="3" y="9" width="10" height="4" fill="#c8c8c8"/><path d="M3 11h10M6.5 9v4M9.5 9v4" stroke="#f0f0f0" stroke-width="0.6"/></svg><span>[plugi...</span></div><div class="tb" style="left:314px"><svg class="abs" style="left:8px;top:2px" width="16" height="16" viewBox="0 0 16 16"><path d="M8 1a7 7 0 1 1 0 14A7 7 0 0 1 8 1z" fill="#3a6ab8"/><path d="M5 2c3 0 7 1 8 5-2-1-4 0-4 2s3 3 5 2c-1 3-5 4-8 3-3-1-5-4-4-8 1 1 2 2 3 1 0-2 0-3 0-5z" fill="#e8801a"/></svg><span>[个人...</span></div><div class="tb" style="left:407px"><svg class="abs" style="left:8px;top:2px" width="16" height="16" viewBox="0 0 16 16"><path d="M2 4c0-2 2-3 6-3s6 1 6 3v10H2z" fill="#f4f4f4" stroke="#c8c8c8"/><rect x="3" y="9" width="10" height="4" fill="#c8c8c8"/><path d="M3 11h10M6.5 9v4M9.5 9v4" stroke="#f0f0f0" stroke-width="0.6"/></svg><span>[doc -...</span></div><div class="tb" style="left:500px"><svg class="abs" style="left:8px;top:2px" width="16" height="16" viewBox="0 0 16 16"><path d="M8 1a7 7 0 1 1 0 14A7 7 0 0 1 8 1z" fill="#3a6ab8"/><path d="M5 2c3 0 7 1 8 5-2-1-4 0-4 2s3 3 5 2c-1 3-5 4-8 3-3-1-5-4-4-8 1 1 2 2 3 1 0-2 0-3 0-5z" fill="#e8801a"/></svg><span>[stlref...</span></div><div class="tb" style="left:593px"><svg class="abs" style="left:8px;top:2px" width="16" height="16" viewBox="0 0 16 16"><path d="M2 4c0-2 2-3 6-3s6 1 6 3v10H2z" fill="#f4f4f4" stroke="#c8c8c8"/><rect x="3" y="9" width="10" height="4" fill="#c8c8c8"/><path d="M3 11h10M6.5 9v4M9.5 9v4" stroke="#f0f0f0" stroke-width="0.6"/></svg><span>[VIM -...</span></div><div class="tb" style="left:686px"><svg class="abs" style="left:8px;top:2px" width="16" height="16" viewBox="0 0 16 16"><path d="M2 2h10v13H2z" fill="#f4f4f4" stroke="#999"/><path d="M4 5h6M4 7h6M4 9h5" stroke="#bbb" stroke-width="0.7"/><path d="M6 12L14 3" stroke="#e0a030" stroke-width="2"/></svg><span>[将vim...</span></div><div class="tb" style="left:779px"><svg class="abs" style="left:8px;top:2px" width="16" height="16" viewBox="0 0 16 16"><path d="M2 2h10v13H2z" fill="#f4f4f4" stroke="#999"/><path d="M4 5h6M4 7h6M4 9h5" stroke="#bbb" stroke-width="0.7"/><path d="M6 12L14 3" stroke="#e0a030" stroke-width="2"/></svg><span>[Read...</span></div><div class="tb" style="left:872px"><svg class="abs" style="left:8px;top:2px" width="16" height="16" viewBox="0 0 16 16"><path d="M2 4c0-2 2-3 6-3s6 1 6 3v10H2z" fill="#f4f4f4" stroke="#c8c8c8"/><rect x="3" y="9" width="10" height="4" fill="#c8c8c8"/><path d="M3 11h10M6.5 9v4M9.5 9v4" stroke="#f0f0f0" stroke-width="0.6"/></svg><span>[ware...</span></div><div class="tb act" style="left:965px"><svg class="abs" style="left:8px;top:2px" width="16" height="16" viewBox="0 0 16 16"><path d="M1 1h6l-1.5 1.5v7l5-7L9.5 1h5l-1 1.5L6 14H4l-1-1V2.5L1 2z" fill="#d0d0d0" stroke="#000" stroke-width="1.1" stroke-linejoin="round"/><path d="M2 7l1.5-1.5L5 7 3.5 8.5z" fill="#3c3"/><path d="M10.5 8l2-2 2 2-2 2z" fill="#2a2"/><path d="M7 10h8v5H7z" fill="#fff" stroke="#000" stroke-width="0.8"/></svg><span>main....</span></div><div class="tb" style="left:1058px"><svg class="abs" style="left:8px;top:2px" width="16" height="16" viewBox="0 0 16 16"><path d="M3 1h7l3 3v11H3z" fill="#f4f4f4" stroke="#aaa"/><path d="M5 5h6M5 7h6M5 9h6" stroke="#bbb" stroke-width="0.7"/><rect x="7" y="9" width="4" height="4" fill="#7aa0d0"/></svg><span>[vim...</span></div><div class="abs" style="left:1151px;top:2px;width:102px;height:22px;background:#ada295"></div><div class="abs" style="left:1152px;top:3px;width:26px;height:20px;background:#fff;border:1px solid #000;border-bottom:2px solid #d08a40"></div><svg class="abs" style="left:1155px;top:3px" width="18" height="18" viewBox="0 0 20 20"><path d="M10 1.5L18.5 10 10 18.5 1.5 10z" fill="#1e9a1e" stroke="#063806" stroke-width="0.9"/><path d="M1.5 1.5h7.5v2.2l-1.2.6v7.2l5.8-7.2-1-.6V1.5h6.4v2.2l-.8.4L8.2 17.8H5.2l-.7-.8V4.3l-3-.6z" fill="#d2d2d2" stroke="#000" stroke-width="1.3" stroke-linejoin="round"/><path d="M3 2.7h5M14 2.7h4.5" stroke="#fff" stroke-width="0.8"/><path d="M9.2 11.5h2.3v6.5H9.2zM12 12.5h7v5.5h-2v-3.5h-.8v3.5h-1.6v-3.5h-.8v3.5H12z" fill="#fff" stroke="#000" stroke-width="1"/></svg><div class="abs" style="left:1202px;top:3px;width:1px;height:20px;background:#e8e2da"></div><div class="abs" style="left:1227px;top:3px;width:1px;height:20px;background:#e8e2da"></div><svg class="abs" style="left:1257px;top:1px" width="22" height="23" viewBox="0 0 22 23"><path d="M3 6c0-4 4-6 8-6s8 2 8 6z" fill="#e8e8e8" stroke="#aaa"/><rect x="2" y="6" width="18" height="3" fill="#f4f4f4" stroke="#bbb" stroke-width="0.8"/><path d="M3.5 9h15l-1.5 13h-12z" fill="#f07818" stroke="#c05808" stroke-width="0.8"/><circle cx="11" cy="15" r="3.2" fill="none" stroke="#fff" stroke-width="1.6"/></svg></div>
</body></html>
